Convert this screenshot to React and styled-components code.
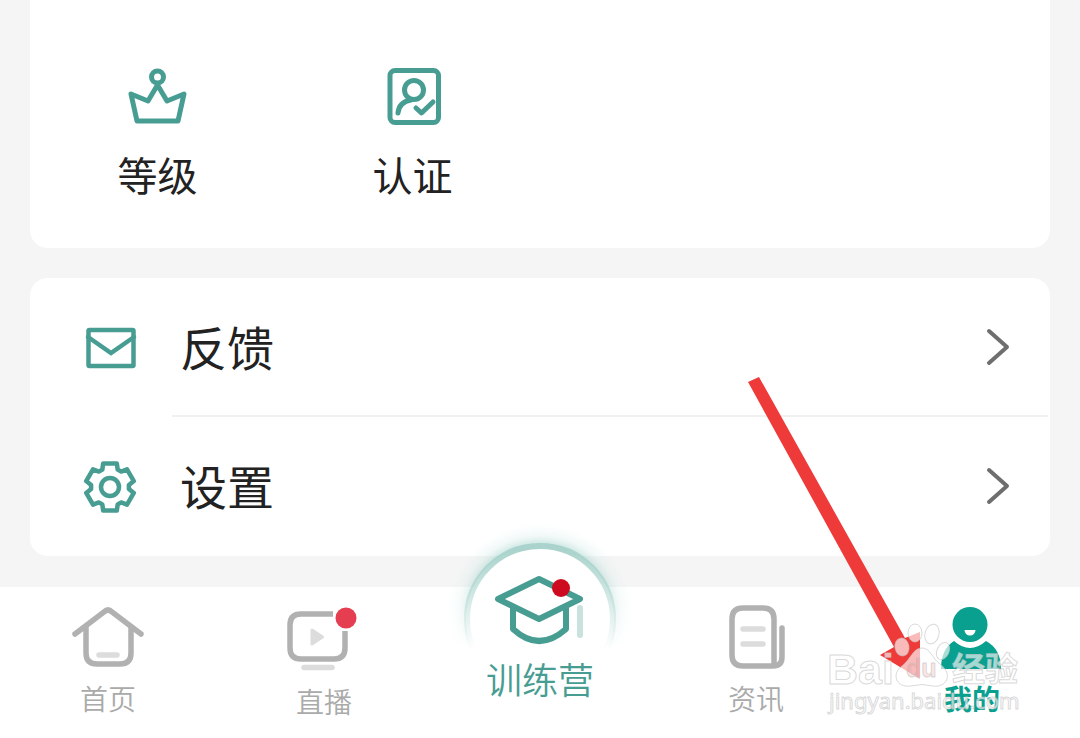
import React from 'react';
import styled, { createGlobalStyle } from 'styled-components';

const GlobalStyle = createGlobalStyle`
  * {
    box-sizing: border-box;
  }

  body {
    margin: 0;
    background: #f5f5f5;
    font-family: 'Noto Sans CJK SC', sans-serif;
  }
`;

const TEAL = '#489d93';
const BRIGHT = '#09a08f';
const GREY = '#b1b1b1';
const PALE = '#dcdcdc';

const Page = styled.div`
  position: relative;
  display: flex;
  flex-direction: column;
  min-height: 100vh;
  overflow: hidden;
`;

const Content = styled.main`
  display: flex;
  flex-direction: column;
  gap: 30px;
  padding: 0 30px 31px;
`;

const ToolCard = styled.section`
  display: grid;
  grid-template-columns: repeat(4, 1fr);
  padding: 66px 0 44px;
  border-radius: 0 0 18px 18px;
  background: #fff;
`;

const Tool = styled.a`
  display: flex;
  flex-direction: column;
  align-items: center;
  gap: 18px;
  color: #222;
  font-size: 40px;
  line-height: 60px;
  text-decoration: none;
`;

const ListCard = styled.section`
  border-radius: 18px;
  background: #fff;
`;

const Row = styled.a`
  display: flex;
  align-items: stretch;
  gap: 32px;
  height: 139px;
  padding: 0 2px 0 50px;
  color: #222;
  font-size: 47px;
  line-height: 68px;
  text-decoration: none;

  & > svg {
    align-self: center;
  }
`;

const RowBody = styled.span`
  display: flex;
  flex: 1;
  align-items: center;
  justify-content: space-between;
  padding: 0 38px 0 8px;
  border-bottom: 2px solid ${({ $divided }) => ($divided ? '#f0f0f0' : 'transparent')};
`;

const RowLabel = styled.span`
  padding-bottom: 2px;
`;

const TabBar = styled.nav`
  display: grid;
  flex: 1;
  grid-template-columns: repeat(5, 1fr);
  align-items: start;
  background: #fff;
`;

const Tab = styled.a`
  display: flex;
  flex-direction: column;
  align-items: center;
  gap: 6px;
  padding: 17px 0 18px;
  color: ${({ $active }) => ($active ? BRIGHT : '#aaa')};
  font-size: 28px;
  font-weight: ${({ $active }) => ($active ? 700 : 350)};
  line-height: 40px;
  text-decoration: none;
`;

const CampTab = styled(Tab)`
  position: relative;
  gap: 0;
  padding: 0;
  color: ${TEAL};
  font-size: 36px;
  line-height: 46px;

  & > * {
    position: relative;
  }

  & > svg + svg {
    margin-top: -20px;
  }
`;

const Halo = styled.svg`
  && {
    position: absolute;
    top: -67px;
    left: 50%;
    margin-left: -100px;
  }
`;

const Overlay = styled.svg`
  position: absolute;
  right: 0;
  bottom: 0;
  pointer-events: none;
`;

const LineIcon = ({ children, size = 60, stroke = 5 }) => (
  <svg
    width={size}
    height={size}
    viewBox="0 0 60 60"
    fill="none"
    stroke={TEAL}
    strokeWidth={stroke}
    strokeLinecap="round"
    strokeLinejoin="round"
    aria-hidden="true"
  >
    {children}
  </svg>
);

const CrownIcon = () => (
  <LineIcon>
    <circle cx="29.5" cy="11" r="6" />
    <path d="M3 28L20 35L29.5 19L39 35L56 28L50 55H9Z" />
  </LineIcon>
);

const CertIcon = () => (
  <LineIcon>
    <rect x="7" y="4.5" width="48.5" height="52" rx="5" />
    <circle cx="31" cy="24" r="9.5" />
    <path d="M15 47Q16 36 28 34M33 42L38.5 47L50 36" />
  </LineIcon>
);

const MailIcon = () => (
  <LineIcon stroke={4.5}>
    <rect x="8.5" y="12" width="45" height="36" rx="1" />
    <path d="M8 19L31 35L54 19" strokeLinejoin="miter" />
  </LineIcon>
);

const gearPoints = [0, 60, 120, 180, 240, 300]
  .flatMap((base) => [[-24, 19], [-16, 24.5], [16, 24.5], [24, 19]].map(([offset, radius]) => {
    const angle = ((base + offset - 90) * Math.PI) / 180;
    return `${(30 + radius * Math.cos(angle)).toFixed(1)},${(30 + radius * Math.sin(angle)).toFixed(1)}`;
  }))
  .join(' ');

const GearIcon = () => (
  <LineIcon stroke={4.5}>
    <polygon points={gearPoints} />
    <circle cx="30" cy="30" r="9" />
  </LineIcon>
);

const Chevron = () => (
  <svg width="24" height="40" viewBox="0 0 24 40" fill="none" stroke="#6e6e6e" strokeWidth="4" strokeLinecap="round" strokeLinejoin="round" aria-hidden="true">
    <path d="M3 4L21 20L3 36" />
  </svg>
);

const TabIcon = ({ children, height = 68 }) => (
  <svg width="80" height={height} viewBox={`0 0 80 ${height}`} fill="none" stroke={GREY} strokeWidth="5.5" strokeLinecap="round" aria-hidden="true">
    {children}
  </svg>
);

const HomeIcon = () => (
  <TabIcon>
    <path d="M7 30L36 8Q40 4 44 8L73 30" />
    <path d="M18 24V49Q18 60 29 60H52Q63 60 63 49V24" />
    <path d="M31 51H49" stroke={PALE} />
  </TabIcon>
);

const LiveIcon = () => (
  <TabIcon height={71}>
    <path d="M49 10H17Q6 10 6 21V44Q6 55 17 55H50Q61 55 61 44V27" strokeLinecap="butt" />
    <path d="M28 26V40L38.5 33Z" fill={PALE} stroke={PALE} strokeWidth="3" strokeLinejoin="round" />
    <path d="M20 63.5H48" stroke={PALE} />
    <circle cx="62" cy="14" r="10.5" fill="#e53e51" stroke="none" />
  </TabIcon>
);

const NewsIcon = () => (
  <TabIcon>
    <path d="M58 61V15Q58 4 47 4H27Q16 4 16 15V51Q16 62 27 62H57Q66 62 66 53V24" />
    <path d="M27 25H47M27 40H47" stroke={PALE} />
  </TabIcon>
);

const MineIcon = () => (
  <TabIcon>
    <g fill={BRIGHT} stroke="none">
      <circle cx="38" cy="20.5" r="17.5" />
      <path d="M22 37Q38 51 54 37Q69 45 69 65H9Q9 45 22 37Z" />
    </g>
    <path d="M32.5 26H43.5A5.5 5.5 0 0 1 32.5 26Z" fill="#fff" stroke="none" />
  </TabIcon>
);

const CampHalo = () => (
  <Halo width="200" height="150" viewBox="0 0 200 150" aria-hidden="true">
    <defs>
      <linearGradient id="fade" x1="0" y1="0" x2="0" y2="1">
        <stop offset="0.2" stopColor="#fff" />
        <stop offset="0.86" stopColor="#000" />
      </linearGradient>
      <mask id="fadeMask">
        <rect width="200" height="150" fill="url(#fade)" />
      </mask>
      <radialGradient id="glow" gradientUnits="userSpaceOnUse" cx="100" cy="99" r="96">
        <stop offset="0.77" stopColor="#8cc8bf" stopOpacity="0.5" />
        <stop offset="0.87" stopColor="#bfe3dd" stopOpacity="0.22" />
        <stop offset="1" stopColor="#e2f3f0" stopOpacity="0" />
      </radialGradient>
    </defs>
    <circle cx="100" cy="99" r="96" fill="url(#glow)" mask="url(#fadeMask)" />
    <circle cx="100" cy="99" r="74" fill="#fff" />
    <circle cx="100" cy="99" r="73" fill="none" stroke="#a9d3cc" strokeWidth="6" mask="url(#fadeMask)" />
  </Halo>
);

const CampIcon = () => (
  <svg width="96" height="88" viewBox="0 0 96 88" fill="none" stroke={TEAL} strokeWidth="6" strokeLinejoin="round" aria-hidden="true">
    <path d="M21 38V62Q47 86 74 62V38" />
    <path d="M47 12L88 32L47 52L6 32Z" fill="#fff" />
    <path d="M88 41V68" stroke="#c9e2de" strokeLinecap="round" />
    <circle cx="69" cy="21" r="9" fill="#ce0a20" stroke="none" />
  </svg>
);

const Guide = () => (
  <Overlay width="400" height="400" viewBox="0 0 400 400" aria-hidden="true">
    <polygon points="68,43 79,38 225,299 240,293 240,340 200,316 214,308" fill="#ef3a3a" />
    <g fill="#fff" fillOpacity="0.65" stroke="#c4c4c4" strokeOpacity="0.65" strokeWidth="1">
      <ellipse cx="222" cy="308" rx="7" ry="9" transform="rotate(-10 222 308)" />
      <ellipse cx="235" cy="294" rx="7" ry="9" />
      <ellipse cx="252" cy="295" rx="7" ry="10" transform="rotate(15 252 295)" />
      <ellipse cx="263" cy="312" rx="6" ry="9" transform="rotate(25 263 312)" />
      <path d="M242 309C250 309 252 319 260 325C274 336 266 349 253 347Q242 344 231 347C216 349 211 335 222 327C231 320 233 309 242 309Z" />
      <g fontFamily="Liberation Sans, sans-serif" fontWeight="700">
        <text x="147" y="345" fontSize="43">Bai</text>
        <text x="226" y="338" fontSize="25" fill="#ef3a3a" fillOpacity="0.15">du</text>
      </g>
      <text x="149" y="370" fontSize="22" fontFamily="Noto Sans, sans-serif">jingyan.baidu.com</text>
      <text x="272" y="342" fontSize="33" fontWeight="700" fontFamily="Noto Sans CJK SC, sans-serif">经验</text>
    </g>
  </Overlay>
);

const App = () => (
  <Page>
    <GlobalStyle />
    <Content>
      <ToolCard>
        <Tool href="#level">
          <CrownIcon />
          等级
        </Tool>
        <Tool href="#cert">
          <CertIcon />
          认证
        </Tool>
      </ToolCard>
      <ListCard>
        <Row href="#feedback">
          <MailIcon />
          <RowBody $divided>
            <RowLabel>反馈</RowLabel>
            <Chevron />
          </RowBody>
        </Row>
        <Row href="#settings">
          <GearIcon />
          <RowBody>
            <RowLabel>设置</RowLabel>
            <Chevron />
          </RowBody>
        </Row>
      </ListCard>
    </Content>
    <TabBar>
      <Tab href="#home">
        <HomeIcon />
        首页
      </Tab>
      <Tab href="#live">
        <LiveIcon />
        直播
      </Tab>
      <CampTab href="#camp">
        <CampHalo />
        <CampIcon />
        <span>训练营</span>
      </CampTab>
      <Tab href="#news">
        <NewsIcon />
        资讯
      </Tab>
      <Tab href="#mine" $active>
        <MineIcon />
        我的
      </Tab>
    </TabBar>
    <Guide />
  </Page>
);

export default App;
